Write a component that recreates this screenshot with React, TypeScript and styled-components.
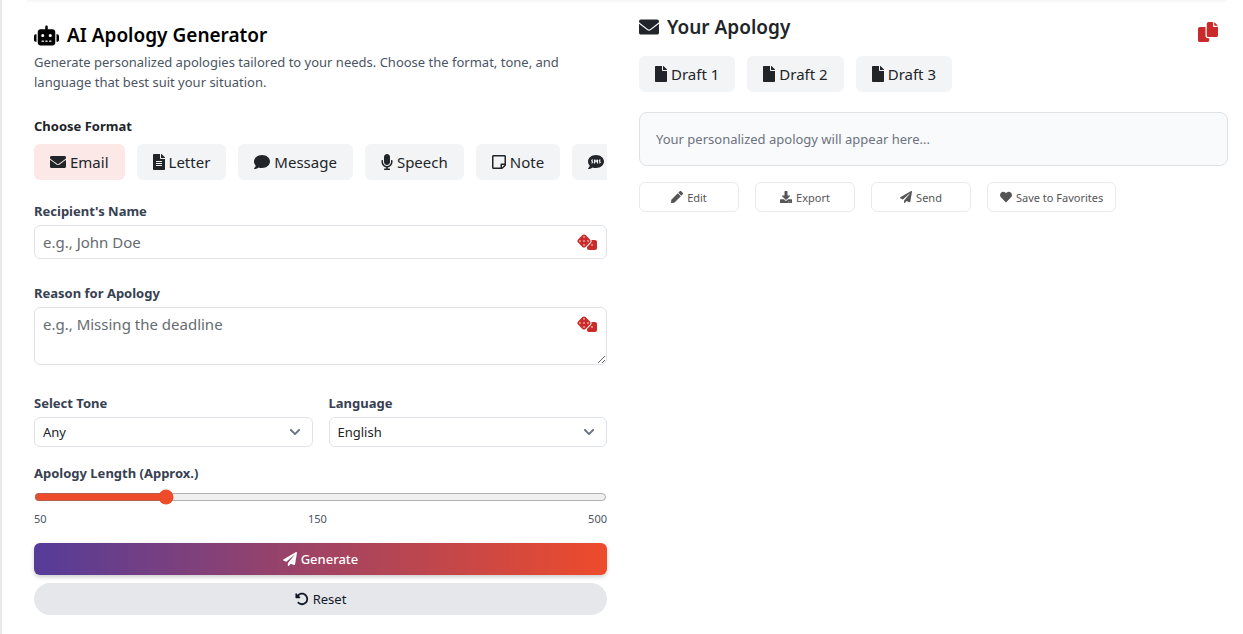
import React, { useState } from "react";
import styled, { createGlobalStyle, css } from "styled-components";
import {
  FaChevronDown,
  FaComment,
  FaDownload,
  FaEnvelope,
  FaFile,
  FaFileAlt,
  FaHeart,
  FaMicrophone,
  FaPaperPlane,
  FaPen,
  FaRegStickyNote,
  FaSms,
} from "react-icons/fa";
import { FaDice, FaRobot, FaRotateLeft } from "react-icons/fa6";

const GlobalStyle = createGlobalStyle`
  *, *::before, *::after { box-sizing: border-box; }
  body {
    margin: 0;
    background: #fff;
    color: #212529;
    font-family: "Segoe UI", "Noto Sans", "Open Sans", sans-serif;
  }
  button, input, select, textarea { font-family: inherit; color: inherit; }
  h1, h2, p { margin: 0; }
  svg { display: block; flex: none; }
`;

const Page = styled.main`
  display: grid;
  grid-template-columns: minmax(0, 1fr) minmax(0, 1fr);
  grid-template-rows: 2px 1fr;
  min-height: 100vh;
  padding-left: 1px;
  border-left: 2px solid #e9e9e9;
`;

const TopEdge = styled.div`
  grid-column: 1 / -1;
  margin: 0 16px 0 24px;
  background: #f8f8f8;
`;

const FormPane = styled.form`
  display: flex;
  flex-direction: column;
  padding: 19px 16px 16px 31px;
`;

const ResultPane = styled.section`
  padding: 11px 15px 16px 16px;
`;

const titleText = css`
  display: flex;
  align-items: center;
  gap: 8px;
  font-size: 19px;
  line-height: 28px;
  font-weight: 600;
`;

const Title = styled.h1`
  ${titleText}
  color: #000;
`;

const ResultTitle = styled.h2`
  ${titleText}
`;

const Intro = styled.p`
  margin: 3px 0 24px;
  font-size: 13px;
  line-height: 20px;
  color: #4b5563;
`;

const Legend = styled.legend`
  padding: 0;
  font-size: 13px;
  line-height: 20px;
  font-weight: 700;
`;

const FormatGroup = styled.fieldset`
  min-width: 0;
  margin: 0 0 21px;
  padding: 0;
  border: 0;
`;

const ChipRow = styled.div`
  display: flex;
  gap: 12px;
  padding-top: 8px;
  overflow-x: auto;
  scrollbar-width: none;
`;

const Chip = styled.button<{ $active?: boolean }>`
  display: flex;
  align-items: center;
  flex: none;
  gap: 4px;
  height: 36px;
  padding: 0 16px;
  border: 0;
  border-radius: 6px;
  background: ${(p) => (p.$active ? "#fde8e8" : "#f3f4f6")};
  font-size: 15px;
  line-height: 24px;
  white-space: nowrap;
`;

const ChipIcon = styled.span<{ $width: number }>`
  display: flex;
  justify-content: center;
  width: ${(p) => p.$width}px;
  font-size: 16px;
`;

const Field = styled.div<{ $gap?: number }>`
  display: flex;
  flex-direction: column;
  gap: 4px;
  min-width: 0;
  margin-bottom: ${(p) => p.$gap ?? 0}px;
`;

const Label = styled.label`
  font-size: 13px;
  line-height: 20px;
  font-weight: 700;
  color: #374151;
`;

const Control = styled.div`
  position: relative;
  display: flex;
`;

const box = css`
  width: 100%;
  border: 1px solid #dee2e6;
  border-radius: 6px;
  background: #fff;
  outline: 0;
  &::placeholder { color: #666b70; opacity: 1; }
`;

const TextInput = styled.input`
  ${box}
  height: 34px;
  padding: 0 40px 0 8px;
  font-size: 15px;
`;

const TextArea = styled.textarea`
  ${box}
  height: 58px;
  padding: 4px 40px 4px 8px;
  font-size: 15px;
  line-height: 24px;
  resize: vertical;
`;

const DiceButton = styled.button`
  position: absolute;
  top: 9px;
  right: 10px;
  padding: 0;
  border: 0;
  background: none;
  color: #c92a2a;
  svg { width: 20px; height: 16px; }
`;

const SelectRow = styled.div`
  display: grid;
  grid-template-columns: 1fr 1fr;
  gap: 16px;
  margin-bottom: 16px;
`;

const Select = styled.select`
  ${box}
  height: 30px;
  padding: 0 32px 0 8px;
  appearance: none;
  font-size: 13px;
`;

const Chevron = styled(FaChevronDown)`
  position: absolute;
  top: 9px;
  right: 12px;
  width: 12px;
  height: 12px;
  color: #6b7280;
  pointer-events: none;
`;

const Slider = styled.input`
  width: 100%;
  height: 16px;
  margin: 2px 0;
  accent-color: #ee4b2b;
`;

const Scale = styled.div`
  display: flex;
  justify-content: space-between;
  margin-bottom: 16px;
  font-size: 11px;
  line-height: 16px;
  color: #4b5563;
`;

const action = css`
  display: flex;
  align-items: center;
  justify-content: center;
  gap: 4px;
  height: 32px;
  border: 0;
  font-size: 13px;
  line-height: 20px;
`;

const GenerateButton = styled.button`
  ${action}
  margin-bottom: 8px;
  border-radius: 6px;
  background: linear-gradient(to right, #553c9a, #ee4b2b);
  color: #fff;
  font-weight: 500;
  box-shadow: 0 2px 4px rgba(0, 0, 0, 0.2);
`;

const ResetButton = styled.button`
  ${action}
  border-radius: 16px;
  background: #e5e7eb;
  color: #111827;
`;

const ResultHeader = styled.header`
  display: flex;
  justify-content: space-between;
  align-items: flex-start;
`;

const CopyButton = styled.button`
  margin: 9px 10px 0 0;
  padding: 0;
  border: 0;
  background: none;
  color: #c92a2a;
`;

const DraftRow = styled(ChipRow)`
  padding-top: 14px;
`;

const Output = styled.output`
  display: block;
  margin: 20px 0 16px;
  padding: 16px;
  border: 1px solid #dee2e6;
  border-radius: 8px;
  background: #f9fafb;
  font-size: 13px;
  line-height: 20px;
  color: #6b7280;
`;

const ActionRow = styled.div`
  display: flex;
  flex-wrap: wrap;
  gap: 16px;
`;

const SmallButton = styled.button`
  display: flex;
  align-items: center;
  justify-content: center;
  gap: 4px;
  min-width: 100px;
  height: 30px;
  padding: 0 12px;
  border: 1px solid #e9eaec;
  border-radius: 6px;
  background: #fff;
  font-size: 11px;
  color: #555;
  svg { width: 12px; height: 12px; }
`;

const HeadingEnvelope = () => (
  <svg width="20" height="20" viewBox="0 0 512 512" fill="currentColor" aria-hidden="true">
    <path d="M256 352c-16.53 0-33.06-5.422-47.16-16.41L0 173.2V400C0 426.5 21.49 448 48 448h416c26.51 0 48-21.49 48-48V173.2l-208.8 162.5C289.1 346.6 272.5 352 256 352zM16.29 145.3l212.2 165.1c16.19 12.6 38.87 12.6 55.06 0l212.2-165.1C505.1 137.3 512 125 512 112C512 85.49 490.5 64 464 64h-416C21.49 64 0 85.49 0 112C0 125 6.01 137.3 16.29 145.3z" />
  </svg>
);

const CopyIcon = () => (
  <svg width="20" height="20" viewBox="0 0 512 512" fill="currentColor" aria-hidden="true">
    <path d="M384 96L384 0h-112c-26.51 0-48 21.49-48 48v288c0 26.51 21.49 48 48 48H464c26.51 0 48-21.49 48-48V128h-95.1C398.4 128 384 113.6 384 96zM416 0v96h96L416 0zM192 352V128h-144c-26.51 0-48 21.49-48 48v288c0 26.51 21.49 48 48 48h192c26.51 0 48-21.49 48-48L288 416h-32C220.7 416 192 387.3 192 352z" />
  </svg>
);

const formats = [
  { name: "Email", Icon: FaEnvelope, width: 16 },
  { name: "Letter", Icon: FaFileAlt, width: 12 },
  { name: "Message", Icon: FaComment, width: 16 },
  { name: "Speech", Icon: FaMicrophone, width: 12 },
  { name: "Note", Icon: FaRegStickyNote, width: 14 },
  { name: "SMS", Icon: FaSms, width: 16 },
];

const actions = [
  { name: "Edit", Icon: FaPen },
  { name: "Export", Icon: FaDownload },
  { name: "Send", Icon: FaPaperPlane },
  { name: "Save to Favorites", Icon: FaHeart },
];

export default function App() {
  const [format, setFormat] = useState("Email");
  const [length, setLength] = useState(150);

  return (
    <>
      <GlobalStyle />
      <Page>
        <TopEdge />
        <FormPane onSubmit={(e) => e.preventDefault()}>
          <Title>
            <FaRobot size={25} />
            AI Apology Generator
          </Title>
          <Intro>
            Generate personalized apologies tailored to your needs. Choose the format, tone, and
            language that best suit your situation.
          </Intro>

          <FormatGroup>
            <Legend>Choose Format</Legend>
            <ChipRow>
              {formats.map(({ name, Icon, width }) => (
                <Chip
                  key={name}
                  type="button"
                  $active={format === name}
                  aria-pressed={format === name}
                  onClick={() => setFormat(name)}
                >
                  <ChipIcon $width={width}>
                    <Icon />
                  </ChipIcon>
                  {name}
                </Chip>
              ))}
            </ChipRow>
          </FormatGroup>

          <Field $gap={24}>
            <Label htmlFor="recipient">Recipient's Name</Label>
            <Control>
              <TextInput id="recipient" type="text" placeholder="e.g., John Doe" />
              <DiceButton type="button" aria-label="Random name">
                <FaDice />
              </DiceButton>
            </Control>
          </Field>

          <Field $gap={28}>
            <Label htmlFor="reason">Reason for Apology</Label>
            <Control>
              <TextArea id="reason" placeholder="e.g., Missing the deadline" />
              <DiceButton type="button" aria-label="Random reason">
                <FaDice />
              </DiceButton>
            </Control>
          </Field>

          <SelectRow>
            <Field>
              <Label htmlFor="tone">Select Tone</Label>
              <Control>
                <Select id="tone">
                  <option>Any</option>
                </Select>
                <Chevron />
              </Control>
            </Field>
            <Field>
              <Label htmlFor="language">Language</Label>
              <Control>
                <Select id="language">
                  <option>English</option>
                </Select>
                <Chevron />
              </Control>
            </Field>
          </SelectRow>

          <Field $gap={4}>
            <Label htmlFor="length">Apology Length (Approx.)</Label>
            <Slider
              id="length"
              type="range"
              min={50}
              max={500}
              value={length}
              onChange={(e) => setLength(Number(e.target.value))}
            />
          </Field>
          <Scale>
            <span>50</span>
            <span>{length}</span>
            <span>500</span>
          </Scale>

          <GenerateButton type="submit">
            <FaPaperPlane size={14} />
            Generate
          </GenerateButton>
          <ResetButton type="reset">
            <FaRotateLeft size={14} />
            Reset
          </ResetButton>
        </FormPane>

        <ResultPane>
          <ResultHeader>
            <ResultTitle>
              <HeadingEnvelope />
              Your Apology
            </ResultTitle>
            <CopyButton type="button" aria-label="Copy">
              <CopyIcon />
            </CopyButton>
          </ResultHeader>
          <DraftRow>
            {[1, 2, 3].map((n) => (
              <Chip key={n} type="button">
                <ChipIcon $width={12}>
                  <FaFile />
                </ChipIcon>
                Draft {n}
              </Chip>
            ))}
          </DraftRow>
          <Output>Your personalized apology will appear here...</Output>
          <ActionRow>
            {actions.map(({ name, Icon }) => (
              <SmallButton key={name} type="button">
                <Icon />
                {name}
              </SmallButton>
            ))}
          </ActionRow>
        </ResultPane>
      </Page>
    </>
  );
}
